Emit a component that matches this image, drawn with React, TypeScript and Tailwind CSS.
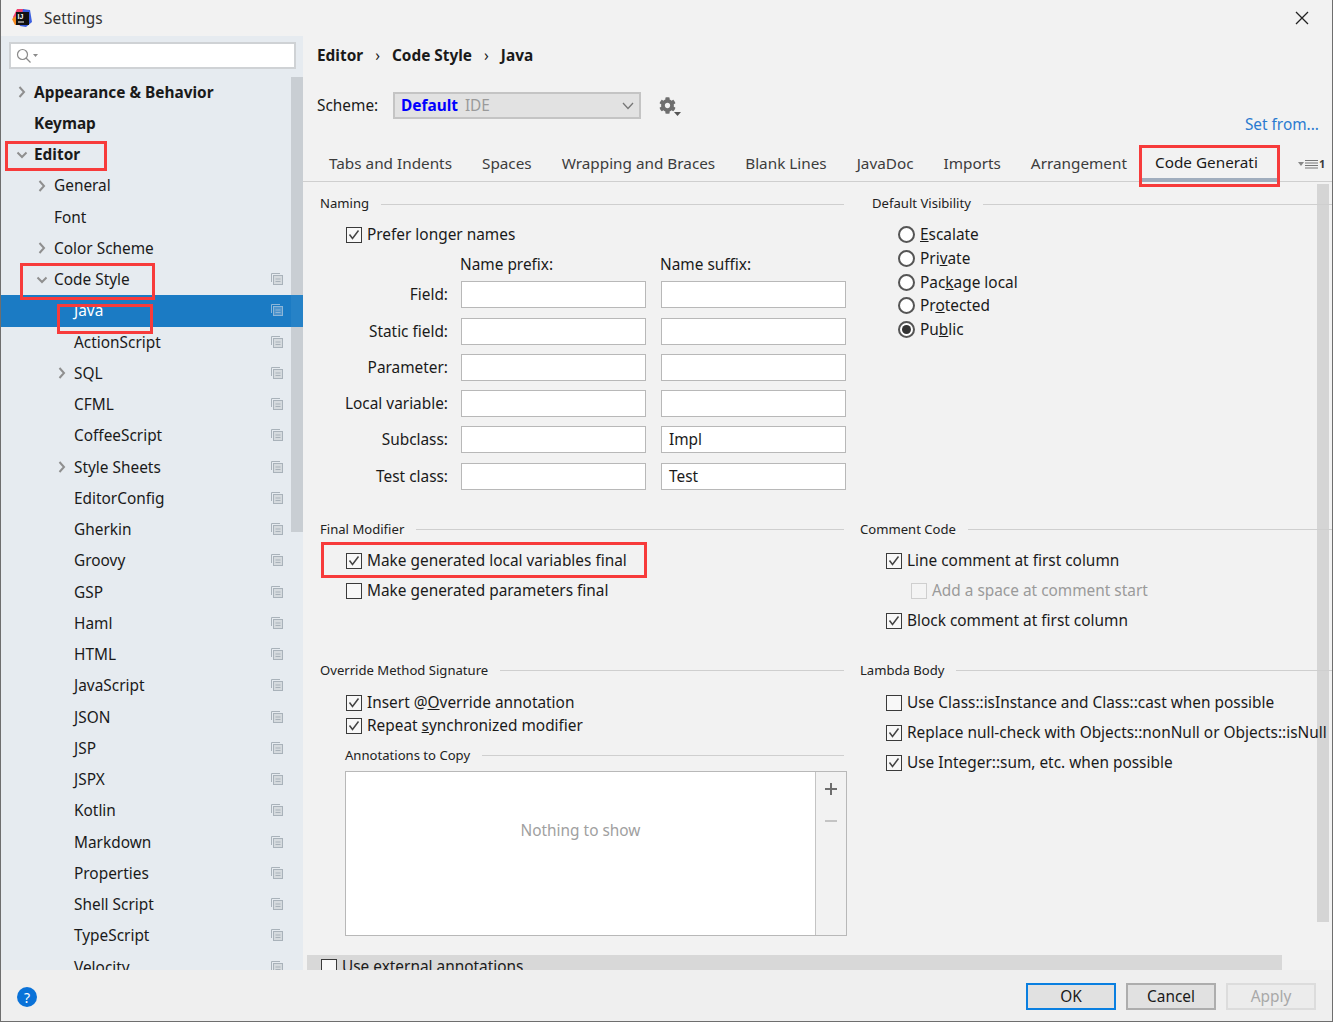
import React from "react";
import { FaCog } from "react-icons/fa";

const Chevron = ({ open }: { open?: boolean }) => (
  <svg width="12" height="12" viewBox="0 0 12 12" fill="none" stroke="#8f8f8f" strokeWidth="2">
    {open ? <path d="M1.5 3.5 L6 8 L10.5 3.5" /> : <path d="M3.5 1 L8 6 L3.5 11" />}
  </svg>
);

const CopyIcon = ({ sel }: { sel?: boolean }) => (
  <svg width="12" height="12" viewBox="0 0 12 12" fill="none" stroke={sel ? "#8db6d8" : "#a9b2ba"} strokeWidth="1">
    <path d="M0.5 9 V0.5 H9" />
    <rect x="2.5" y="2.5" width="9" height="9" fill={sel ? "#4f94cc" : "#d5dade"} />
    <path d="M4.5 6 H9.5 M4.5 8.5 H9.5" />
  </svg>
);

type Node = { t: string; lv: number; bold?: boolean; ch?: "o" | "c"; copy?: boolean; sel?: boolean };
const tree: Node[] = [
  { t: "Appearance & Behavior", lv: 0, bold: true, ch: "c" },
  { t: "Keymap", lv: 0, bold: true },
  { t: "Editor", lv: 0, bold: true, ch: "o" },
  { t: "General", lv: 1, ch: "c" },
  { t: "Font", lv: 1 },
  { t: "Color Scheme", lv: 1, ch: "c" },
  { t: "Code Style", lv: 1, ch: "o", copy: true },
  { t: "Java", lv: 2, copy: true, sel: true },
  { t: "ActionScript", lv: 2, copy: true },
  { t: "SQL", lv: 2, ch: "c", copy: true },
  { t: "CFML", lv: 2, copy: true },
  { t: "CoffeeScript", lv: 2, copy: true },
  { t: "Style Sheets", lv: 2, ch: "c", copy: true },
  { t: "EditorConfig", lv: 2, copy: true },
  { t: "Gherkin", lv: 2, copy: true },
  { t: "Groovy", lv: 2, copy: true },
  { t: "GSP", lv: 2, copy: true },
  { t: "Haml", lv: 2, copy: true },
  { t: "HTML", lv: 2, copy: true },
  { t: "JavaScript", lv: 2, copy: true },
  { t: "JSON", lv: 2, copy: true },
  { t: "JSP", lv: 2, copy: true },
  { t: "JSPX", lv: 2, copy: true },
  { t: "Kotlin", lv: 2, copy: true },
  { t: "Markdown", lv: 2, copy: true },
  { t: "Properties", lv: 2, copy: true },
  { t: "Shell Script", lv: 2, copy: true },
  { t: "TypeScript", lv: 2, copy: true },
  { t: "Velocity", lv: 2, copy: true },
];

const Row = ({ n }: { n: Node }) => (
  <div className={`relative flex h-[31.25px] shrink-0 items-center ${n.sel ? "bg-[#1b7bc4] text-white" : "text-[#1a1a1a]"}`}>
    <div className={`flex items-center ${n.lv === 0 ? "w-[33px] pl-[15px]" : n.lv === 1 ? "w-[53px] pl-[35px]" : "w-[73px] pl-[55px]"}`}>
      {n.ch && <Chevron open={n.ch === "o"} />}
    </div>
    <span className={n.bold ? "font-bold" : ""}>{n.t}</span>
    {n.copy && (
      <span className="absolute left-[270px] top-[9px] flex">
        <CopyIcon sel={n.sel} />
      </span>
    )}
    {n.sel && <span className="absolute bottom-0 right-0 top-0 w-[12px] bg-white/5" />}
  </div>
);

const Check = ({ on, off }: { on?: boolean; off?: boolean }) => (
  <span className={`flex h-[16px] w-[16px] shrink-0 items-center justify-center border ${off ? "border-[#cfcfcf] bg-[#f4f4f4]" : "border-[#3a3a3a] bg-[#f8f8f8]"}`}>
    {on && (
      <svg width="14" height="14" viewBox="0 0 14 14" fill="none" stroke="#444" strokeWidth="1.5">
        <path d="M2.5 6.5 L5.5 10.5 L11.5 2.5" />
      </svg>
    )}
  </span>
);

const CheckRow = ({ on, off, children, className = "" }: { on?: boolean; off?: boolean; children: React.ReactNode; className?: string }) => (
  <div className={`flex h-[24px] items-center gap-[5px] whitespace-nowrap ${off ? "text-[#9a9a9a]" : ""} ${className}`}>
    <Check on={on} off={off} />
    <span>{children}</span>
  </div>
);

const Radio = ({ on, children }: { on?: boolean; children: React.ReactNode }) => (
  <div className="flex h-[23.7px] items-center gap-[5px]">
    <span className="flex h-[17px] w-[17px] items-center justify-center rounded-full border-2 border-[#555] bg-white">
      {on && <span className="h-[9px] w-[9px] rounded-full bg-[#333]" />}
    </span>
    <span>{children}</span>
  </div>
);

const Group = ({ title, className = "" }: { title: string; className?: string }) => (
  <div className={`flex h-[18px] items-center gap-[12px] whitespace-nowrap text-[13.1px] text-[#222] ${className}`}>
    <span>{title}</span>
    <span className="h-px flex-1 bg-[#cfcfcf]" />
  </div>
);

const Input = ({ v }: { v?: string }) => (
  <div className="flex h-[27px] items-center border border-[#b8b8b8] bg-white pl-[7px]">{v}</div>
);

const Red = ({ className }: { className: string }) => (
  <div className={`pointer-events-none absolute border-[3px] border-[#f73b3b] ${className}`} />
);

const tabs = ["Tabs and Indents", "Spaces", "Wrapping and Braces", "Blank Lines", "JavaDoc", "Imports", "Arrangement"];
const fields: [string, string?][] = [["Field:"], ["Static field:"], ["Parameter:"], ["Local variable:"], ["Subclass:", "Impl"], ["Test class:", "Test"]];

const Button = ({ children, kind }: { children: string; kind?: "ok" | "off" }) => (
  <div
    className={`flex h-[27px] w-[90px] items-center justify-center border-2 ${
      kind === "ok" ? "border-[#0a7fe0] bg-[#e1e1e1]" : kind === "off" ? "border-[#dcdcdc] bg-[#ececec] text-[#a8a8a8]" : "border-[#adadad] bg-[#e1e1e1]"
    }`}
  >
    {children}
  </div>
);

export default function App() {
  return (
    <div className="relative flex h-[1022px] w-[1333px] flex-col overflow-hidden border-x border-b border-[#6e6e6e] bg-[#f2f2f2] font-['Noto_Sans',sans-serif] text-[15.4px] text-[#1a1a1a]">
      {/* title bar */}
      <div className="flex h-[36px] shrink-0 items-center pl-[11px] pr-[23px]">
        <svg width="20" height="20" viewBox="0 0 20 20">
          <path d="M1 9 L5 1 L12 1 L10 18 L3 16 Z" fill="#f0406e" />
          <path d="M0 11 L5 7 L7 17 L3 17 Z" fill="#f58a1f" />
          <path d="M11 1 L18 2 L20 14 L14 19 L8 18 Z" fill="#3b5fe0" />
          <rect x="4" y="4" width="13" height="13" fill="#111" />
          <text x="5.5" y="11" fontSize="7" fontWeight="700" fill="#fff" fontFamily="Liberation Sans">IJ</text>
          <rect x="6" y="13.5" width="6" height="1" fill="#fff" />
        </svg>
        <span className="ml-[12px] pt-[1px] text-[15.4px] text-[#333]">Settings</span>
        <svg className="ml-auto" width="14" height="14" viewBox="0 0 14 14" stroke="#222" strokeWidth="1.3">
          <path d="M1 1 L13 13 M13 1 L1 13" />
        </svg>
      </div>

      <div className="flex min-h-0 flex-1">
        {/* sidebar */}
        <aside className="relative flex w-[302px] shrink-0 flex-col overflow-hidden bg-[#e6ebf0]">
          <div className="absolute right-0 top-[41px] h-[455px] w-[12px] bg-[#c9ced3]" />
          <div className="relative pl-[8px] pr-[7px] pt-[6px]">
            <div className="flex h-[27px] items-center gap-[1px] border-2 border-[#cfd2d5] bg-white pl-[5px]">
              <svg width="16" height="16" viewBox="0 0 16 16" fill="none" stroke="#8a8a8a" strokeWidth="1.2">
                <circle cx="6.5" cy="6.5" r="5" />
                <path d="M10 10 L14.5 14.5" />
              </svg>
              <svg width="5" height="3" viewBox="0 0 5 3" fill="#8a8a8a"><path d="M0 0 H5 L2.5 3 Z" /></svg>
            </div>
          </div>
          <div className="relative mt-[7.5px] flex flex-col">
            {tree.map((n) => (
              <Row key={n.t} n={n} />
            ))}
          </div>
        </aside>

        {/* main */}
        <main className="flex min-w-0 flex-1 flex-col">
          <div className="flex h-[38px] shrink-0 items-center pl-[14px] pt-[1px] font-bold">
            <span>Editor</span>
            <span className="mx-[12px] font-normal">›</span>
            <span>Code Style</span>
            <span className="mx-[12px] font-normal">›</span>
            <span>Java</span>
          </div>
          <div className="mt-[18px] flex h-[44px] shrink-0 items-start pl-[14px] pr-[13px]">
            <span className="flex h-[27px] w-[76px] items-center">Scheme:</span>
            <div className="flex h-[27px] w-[248px] items-center border-2 border-[#c4c4c4] bg-[#e2e2e2] pl-[6px] pr-[5px]">
              <span className="font-bold text-[#0000ff]">Default</span>
              <span className="ml-[7px] text-[#9a9a9a]">IDE</span>
              <svg className="ml-auto" width="12" height="8" viewBox="0 0 12 8" fill="none" stroke="#777" strokeWidth="1.3">
                <path d="M1 1 L6 6.5 L11 1" />
              </svg>
            </div>
            <div className="relative ml-[18px] mt-[5px] h-[17px] w-[22px]">
              <FaCog className="h-[17px] w-[17px] text-[#6e6e6e]" />
              <svg className="absolute bottom-[-2px] right-0" width="7" height="4" viewBox="0 0 7 4" fill="#555"><path d="M0 0 H7 L3.5 4 Z" /></svg>
            </div>
            <span className="ml-auto self-end text-[#2a7ad0]">Set from...</span>
          </div>
          <div className="mt-[9px] flex h-[37px] shrink-0 border-b border-[#cfcfcf] pl-[11px] text-[15.3px] text-[#3c3c3c]">
            {tabs.map((t) => (
              <div key={t} className="flex items-center whitespace-nowrap px-[15px]">{t}</div>
            ))}
            <div className="absolute left-[1141px] top-[145px] flex h-[37px] w-[135px] items-center whitespace-nowrap border-b-[4px] border-[#a0adbd] pl-[13px] pt-[2px] text-[#1a1a1a]">
              Code Generati
            </div>
            <div className="absolute left-[1297px] top-[156px] flex items-center gap-[1px] text-[11px] font-bold">
              <svg width="6" height="4" viewBox="0 0 6 4" fill="#888"><path d="M0 0 H6 L3 4 Z" /></svg>
              <svg width="13" height="10" viewBox="0 0 13 10" stroke="#777" strokeWidth="1.2"><path d="M0 1.5 H13 M0 4 H13 M0 6.5 H13 M0 9 H13" /></svg>
              <span>1</span>
            </div>
          </div>

          <div className="relative min-h-0 flex-1 overflow-hidden pl-[17px] pt-[13px]">
            <div className="absolute left-[1014px] top-[2px] h-[738px] w-[12px] bg-[#d5d5d5]" />

            {/* section 1 */}
            <div className="relative flex">
              <div className="w-[526px] shrink-0">
                <Group title="Naming" className="mr-[2px]" />
                <div className="mt-[10px] pl-[26px]">
                  <CheckRow on>Prefer longer names</CheckRow>
                </div>
                <div className="mt-[7px] grid grid-cols-[128px_185px_185px] gap-x-[13px] gap-y-[9.3px]">
                  <span />
                  <span className="-ml-px h-[18px] leading-[22px]">Name prefix:</span>
                  <span className="ml-[1px] h-[18px] leading-[22px]">Name suffix:</span>
                  {fields.map(([l, v]) => (
                    <React.Fragment key={l}>
                      <span className="flex h-[27px] items-center justify-end">{l}</span>
                      <Input />
                      <div className="ml-[2px] w-[185px]">
                        <Input v={v} />
                      </div>
                    </React.Fragment>
                  ))}
                </div>
              </div>
              <div className="ml-[26px] flex-1">
                <Group title="Default Visibility" className="w-[500px]" />
                <div className="mt-[10px] flex flex-col pl-[26px]">
                  <Radio><u>E</u>scalate</Radio>
                  <Radio>Pri<u>v</u>ate</Radio>
                  <Radio>Pac<u>k</u>age local</Radio>
                  <Radio>Pr<u>o</u>tected</Radio>
                  <Radio on>Pu<u>b</u>lic</Radio>
                </div>
              </div>
            </div>

            {/* section 2 */}
            <div className="relative mt-[31px] flex">
              <div className="w-[526px] shrink-0">
                <Group title="Final Modifier" className="mr-[2px]" />
                <div className="mt-[10px] flex flex-col gap-[6px] pl-[26px]">
                  <CheckRow on>Make generated local variables final</CheckRow>
                  <CheckRow>Make generated parameters final</CheckRow>
                </div>
              </div>
              <div className="ml-[14px] flex-1">
                <Group title="Comment Code" className="w-[500px]" />
                <div className="mt-[10px] flex flex-col gap-[6px] pl-[26px]">
                  <CheckRow on>Line comment at first column</CheckRow>
                  <CheckRow off className="pl-[25px]">Add a space at comment start</CheckRow>
                  <CheckRow on>Block comment at first column</CheckRow>
                </div>
              </div>
            </div>

            {/* section 3 */}
            <div className="relative mt-[29px] flex">
              <div className="w-[526px] shrink-0">
                <Group title="Override Method Signature" className="mr-[2px]" />
                <div className="mt-[11px] flex flex-col pl-[26px]">
                  <CheckRow on>Insert @<u>O</u>verride annotation</CheckRow>
                  <CheckRow on className="-mt-px">Repeat <u>s</u>ynchronized modifier</CheckRow>
                </div>
                <div className="mt-[9px] pl-[25px]">
                  <Group title="Annotations to Copy" className="mr-[2px]" />
                  <div className="mt-[6px] flex h-[165px] w-[502px] border border-[#b8b8b8]">
                    <div className="flex flex-1 items-start justify-center bg-white pt-[47px] text-[#a0a0a0]">Nothing to show</div>
                    <div className="flex w-[31px] flex-col items-center border-l border-[#c4c4c4] pt-[11px]">
                      <svg width="12" height="12" viewBox="0 0 12 12" stroke="#6e6e6e" strokeWidth="2"><path d="M6 0 V12 M0 6 H12" /></svg>
                      <svg className="mt-[20px]" width="12" height="12" viewBox="0 0 12 12" stroke="#c4c4c4" strokeWidth="2"><path d="M0 6 H12" /></svg>
                    </div>
                  </div>
                </div>
              </div>
              <div className="ml-[14px] flex-1">
                <Group title="Lambda Body" className="w-[500px]" />
                <div className="mt-[11px] flex flex-col gap-[6px] pl-[26px]">
                  <CheckRow>Use Class::isInstance and Class::cast when possible</CheckRow>
                  <CheckRow on>Replace null-check with Objects::nonNull or Objects::isNull</CheckRow>
                  <CheckRow on>Use Integer::sum, etc. when possible</CheckRow>
                </div>
              </div>
            </div>

            <div className="relative -ml-[13px] mt-[19px] flex h-[15px] w-[975px] items-start gap-[5px] overflow-hidden bg-[#d8d8d8] pl-[14px] pt-[4px]">
              <Check />
              <span className="-mt-[2px] whitespace-nowrap leading-[20px]">Use external annotations</span>
            </div>
          </div>
        </main>
      </div>

      {/* footer */}
      <footer className="flex h-[51px] shrink-0 items-start justify-between bg-[#efefef] pl-[16px] pr-[16px] pt-[13px]">
        <div className="mt-[4px] flex h-[20px] w-[20px] items-center justify-center rounded-full bg-[#0a72d8] text-[14px] text-white">?</div>
        <div className="flex gap-[10px]">
          <Button kind="ok">OK</Button>
          <Button>Cancel</Button>
          <Button kind="off">Apply</Button>
        </div>
      </footer>

      {/* red annotation boxes */}
      <Red className="left-[4px] top-[141px] h-[30px] w-[102px]" />
      <Red className="left-[19px] top-[263px] h-[37px] w-[135px]" />
      <Red className="left-[56px] top-[304px] h-[30px] w-[96px]" />
      <Red className="left-[1138px] top-[145px] h-[42px] w-[141px]" />
      <Red className="left-[320px] top-[542px] h-[36px] w-[326px]" />
    </div>
  );
}
